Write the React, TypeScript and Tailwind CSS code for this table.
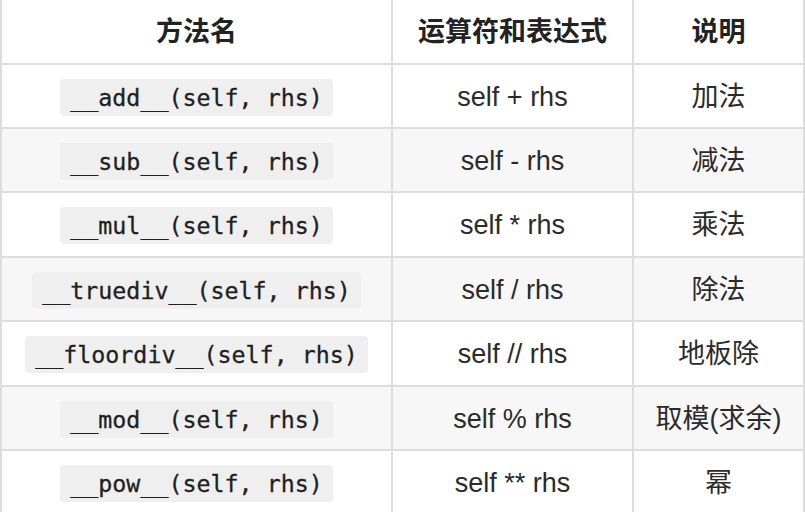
const ROWS = [
  { method: '__add__(self, rhs)', expr: 'self + rhs', desc: '加法' },
  { method: '__sub__(self, rhs)', expr: 'self - rhs', desc: '减法' },
  { method: '__mul__(self, rhs)', expr: 'self * rhs', desc: '乘法' },
  { method: '__truediv__(self, rhs)', expr: 'self / rhs', desc: '除法' },
  { method: '__floordiv__(self, rhs)', expr: 'self // rhs', desc: '地板除' },
  { method: '__mod__(self, rhs)', expr: 'self % rhs', desc: '取模(求余)' },
  { method: '__pow__(self, rhs)', expr: 'self ** rhs', desc: '幂' },
];

// content heights between the 2px rules, top row is partly cut off
const HEIGHTS = ['h-[62px]', 'h-[62px]', 'h-[63px]', 'h-[62px]', 'h-[63px]', 'h-[62px]', 'h-[63px]'];

const sans = "font-['Liberation_Sans','Noto_Sans_CJK_SC',sans-serif]";

function Cell({ children, striped, className = '' }: { children: React.ReactNode; striped?: boolean; className?: string }) {
  return (
    <div className={`flex items-center justify-center ${striped ? 'bg-[#f7f7f7]' : 'bg-white'} ${className}`}>
      {children}
    </div>
  );
}

export default function App() {
  return (
    <div className={`w-[805px] h-[512px] overflow-hidden bg-white text-[#2b2b2b] ${sans}`}>
      <div className="flex flex-col gap-[2px] bg-[#dddddd] px-[2px]">
        {/* Header */}
        <div className="grid grid-cols-[389px_239px_169px] gap-[2px] h-[63px]">
          <Cell className="text-[27px] font-bold text-[#222] pt-[2px]">方法名</Cell>
          <Cell className="text-[27px] font-bold text-[#222] pt-[2px]">运算符和表达式</Cell>
          <Cell className="text-[27px] font-bold text-[#222] pt-[2px]">说明</Cell>
        </div>

        {ROWS.map((r, i) => {
          const striped = i % 2 === 1;
          return (
            <div key={r.method} className={`grid grid-cols-[389px_239px_169px] gap-[2px] ${HEIGHTS[i]}`}>
              <Cell striped={striped}>
                <code className="font-['DejaVu_Sans_Mono',monospace] text-[23.3px] leading-[27px] text-[#1f1f1f] bg-[#efefef] rounded-[4px] px-[10px] py-[5px] mt-[2px] [-webkit-text-stroke:0.3px_#1f1f1f]">
                  {r.method}
                </code>
              </Cell>
              <Cell striped={striped} className="text-[27px] pt-[2px]">{r.expr}</Cell>
              <Cell striped={striped} className="text-[27px] pt-[2px]">{r.desc}</Cell>
            </div>
          );
        })}
      </div>
    </div>
  );
}
